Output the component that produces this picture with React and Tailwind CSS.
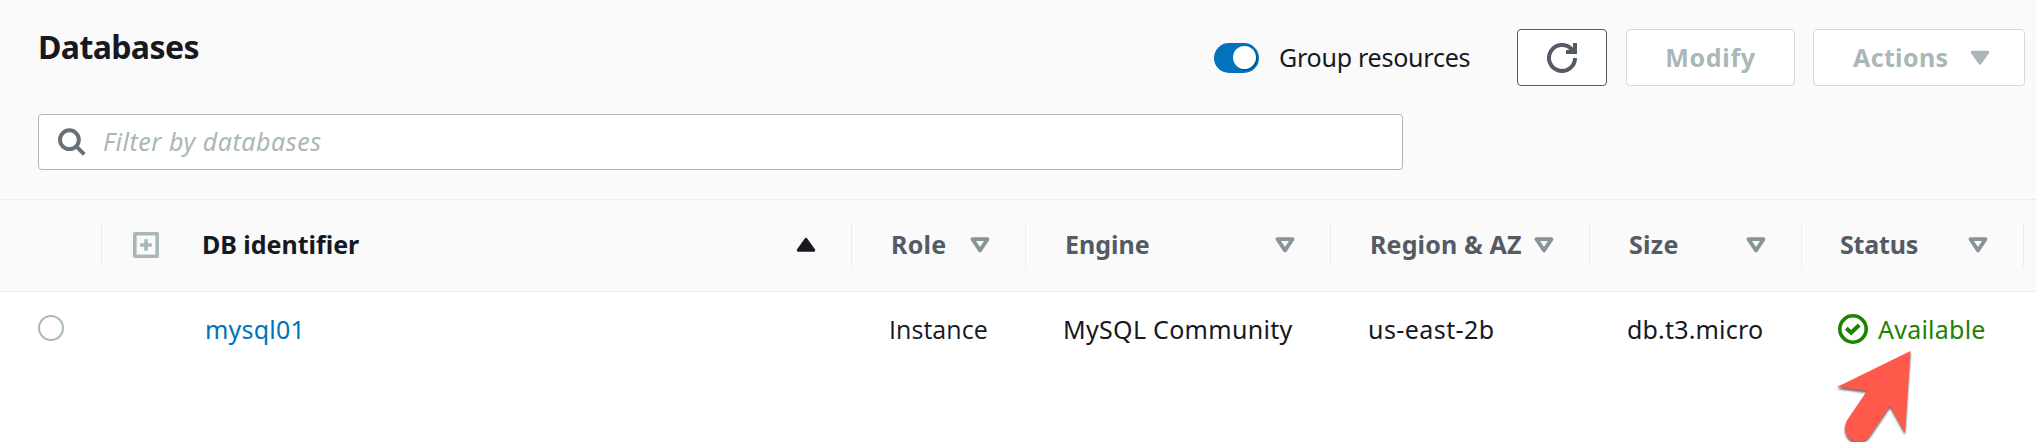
import React from 'react';

const GRID = 'grid grid-cols-[102px_750px_174px_305px_259px_212px_222px]';

const columns = [
  { label: 'Role', spacing: 'tracking-[0.25px]' },
  { label: 'Engine', spacing: 'tracking-[0px]' },
  { label: 'Region & AZ', spacing: 'tracking-[0.15px]' },
  { label: 'Size', spacing: 'tracking-[0.3px]' },
  { label: 'Status', spacing: 'tracking-[-0.2px]', nudge: '-ml-px' },
];

function SortIcon() {
  return (
    <svg className="size-5 shrink-0 text-[#879596]" viewBox="0 0 20 20" fill="none" stroke="currentColor" strokeWidth="3.8" strokeLinejoin="round">
      <path d="M2.5 4.2H17.5L10 15.4Z" />
    </svg>
  );
}

function Divider() {
  return <span className="ml-auto h-[45px] w-px shrink-0 bg-[#eaeded]" />;
}

function Toolbar() {
  return (
    <header className="h-[199px] pl-[38px]">
      <div className="flex h-[114px] items-start pt-[29px] pr-[11px]">
        <h1 className="mt-px h-[34px] text-[32px] leading-[34px] font-bold tracking-[-0.6px]">Databases</h1>
        <div className="ml-auto flex h-[57px] items-center">
          <button type="button" role="switch" aria-checked="true" aria-label="Group resources" className="flex h-[30px] w-[45px] items-center justify-end rounded-full bg-[#0073bb] pr-[3px]">
            <span className="size-[23px] rounded-full bg-white shadow-[1px_1px_1px_0px_rgba(0,28,36,0.5)]" />
          </button>
          <span className="ml-[20px] w-[238px] pb-[2px] whitespace-nowrap tracking-[-0.24px]">Group resources</span>
          <button type="button" aria-label="Refresh" className="flex h-[57px] w-[90px] items-center justify-center rounded-[4px] border border-[#545b64] bg-white text-[#545b64]">
            <svg className="size-[30px]" viewBox="0 0 30 30" fill="none" stroke="currentColor" strokeWidth="4">
              <path d="M28 15A13 13 0 1 1 24.4 6L27 9" />
              <path d="M28 0V9H19" />
            </svg>
          </button>
          <button type="button" disabled className="ml-[19px] h-[57px] w-[169px] rounded-[4px] border border-[#d5dbdb] bg-white pb-px font-bold tracking-[0.7px] text-[#aab7b8]">Modify</button>
          <button type="button" disabled className="ml-[18px] flex h-[57px] w-[212px] items-center rounded-[4px] border border-[#d5dbdb] bg-white pl-[39px] font-bold text-[#aab7b8]">
            <span className="w-[117px] pb-px text-left tracking-[0.35px]">Actions</span>
            <svg className="size-5" viewBox="0 0 20 20" fill="currentColor" stroke="currentColor" strokeWidth="3" strokeLinejoin="round">
              <path d="M2.3 4.3H17.7L10 15.2Z" />
            </svg>
          </button>
        </div>
      </div>
      <label className="flex h-14 w-[1365px] items-center rounded-[4px] border border-[#aab7b8] bg-white pl-[19px]">
        <svg className="size-7 shrink-0 text-[#687078]" viewBox="0 0 28 28" fill="none" stroke="currentColor" strokeWidth="4">
          <circle cx="11.4" cy="11.7" r="9.4" />
          <path d="M18 18.2L26.3 26.4" />
        </svg>
        <span className="ml-[17px] pb-[2px] tracking-[0.55px] text-[#aab7b8] italic">Filter by databases</span>
      </label>
    </header>
  );
}

function HeaderRow() {
  return (
    <div className={`${GRID} h-[93px] items-center border-y border-[#eaeded] pb-[2px] text-[#545b64]`}>
      <div className="flex items-center"><Divider /></div>
      <div className="flex items-center pl-[31px] font-bold text-[#16191f]">
        <svg className="size-[26px] shrink-0 text-[#aab7b8]" viewBox="0 0 26 26" fill="none" stroke="currentColor" strokeWidth="3.6" strokeLinejoin="round">
          <path d="M1.8 1.8H24.2V24.2H1.8Z" />
          <path d="M13 7.2V18.8M7.2 13H18.8" />
        </svg>
        <span className="ml-[43px] -mt-px tracking-[-0.02px]">DB identifier</span>
        <svg className="mr-[35px] ml-auto size-5" viewBox="0 0 20 20" fill="currentColor" stroke="currentColor" strokeWidth="3" strokeLinejoin="round">
          <path d="M2.3 15.2H17.7L10 4.3Z" />
        </svg>
        <span className="h-[45px] w-px bg-[#eaeded]" />
      </div>
      {columns.map((c) => (
        <div key={c.label} className="flex items-center pl-[39px] font-bold">
          <span className={`-mt-px whitespace-nowrap ${c.spacing} ${c.nudge ?? ''}`}>{c.label}</span>
          <span className="mr-[35px] ml-auto"><SortIcon /></span>
          <span className="h-[45px] w-px bg-[#eaeded]" />
        </div>
      ))}
    </div>
  );
}

function InstanceRow() {
  return (
    <div className={`${GRID} h-[74px] items-center bg-white`}>
      <div className="pb-[2px] pl-[38px]">
        <span className="block size-[26px] rounded-full border-2 border-[#aab7b8]" />
      </div>
      <a className="pb-px pl-[103px] tracking-[0.2px] text-[#0073bb]">mysql01</a>
      <span className="pb-px pl-[37px] font-['Open_Sans','Noto_Sans',sans-serif] tracking-[0.05px]">Instance</span>
      <span className="pb-px pl-[37px] tracking-[0.3px]">MySQL Community</span>
      <span className="pb-px pl-[37px] tracking-[0.43px]">us-east-2b</span>
      <span className="pb-px pl-[37px] tracking-[0.18px]">db.t3.micro</span>
      <span className="flex items-center pl-[36px] text-[#1d8102]">
        <svg className="mr-[10px] size-[30px]" viewBox="0 0 30 30" fill="none" stroke="currentColor" strokeWidth="3.6">
          <circle cx="15" cy="15" r="13.2" />
          <path d="M8.3 14.2L13.2 18.8L21.2 11" strokeWidth="4" />
        </svg>
        <span className="pb-px tracking-[0.24px]">Available</span>
      </span>
    </div>
  );
}

export default function App() {
  return (
    <div className="relative h-[448px] w-[2036px] overflow-hidden bg-white font-['Noto_Sans',sans-serif] text-[25px] leading-[34px] text-[#16191f]">
      <div className="bg-[#fafafa]">
        <Toolbar />
        <HeaderRow />
      </div>
      <InstanceRow />
      <svg className="absolute top-[346px] left-[1832px] h-24 w-[88px]" viewBox="0 0 88 96">
        <path className="drop-shadow-[0px_2px_1px_rgba(0,0,0,0.6)]" fill="#ff594c" d="M78.5 5L73 87L58 60L39 88C35 94 31 96 26 96C18 96 13 89 13 83C13 79 14 76 16 73L35 45L5 41Z" />
      </svg>
    </div>
  );
}
